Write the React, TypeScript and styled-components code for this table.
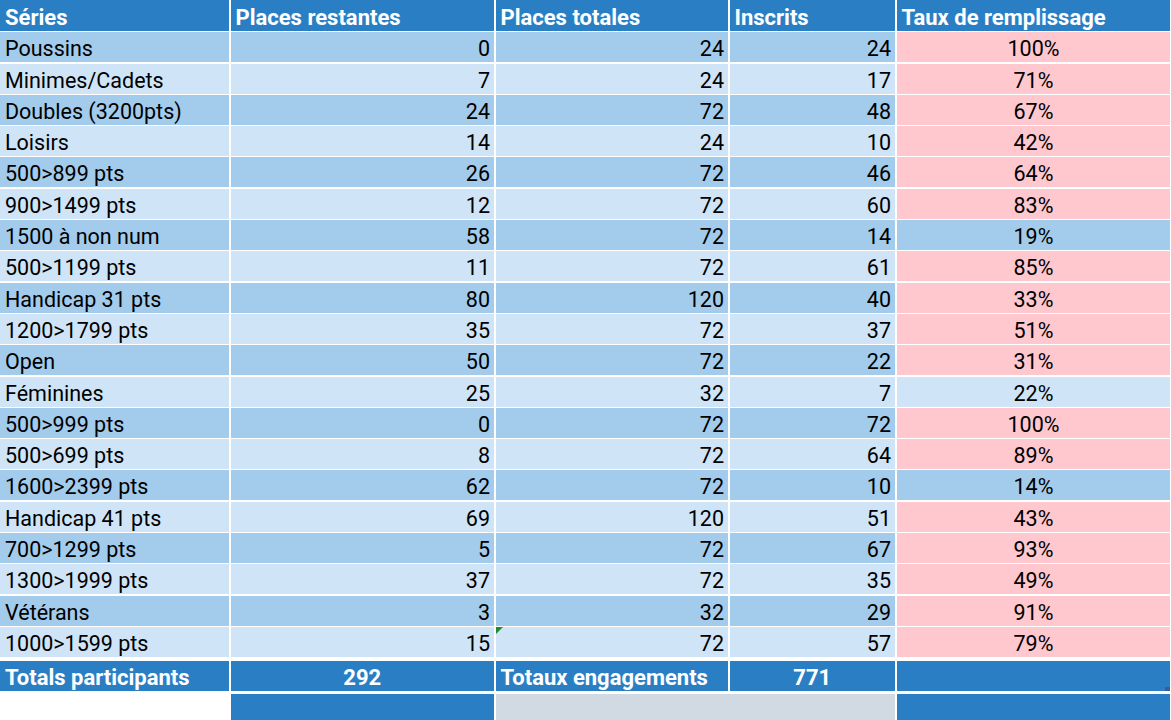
import styled, { createGlobalStyle, css } from "styled-components";

const GlobalStyle = createGlobalStyle`
  html, body {
    margin: 0;
    padding: 0;
    background: #ffffff;
  }
  body {
    font-family: Roboto, "Noto Sans", "Liberation Sans", sans-serif;
    overflow: hidden;
  }
`;

type Tone = "dark" | "light" | "pink" | "blue" | "grey" | "blank";

const tones: Record<Tone, string> = {
  dark: "#a3cbeb",
  light: "#cfe4f6",
  pink: "#ffc7ce",
  blue: "#2a7fc4",
  grey: "#d1dae3",
  blank: "#ffffff",
};

const Sheet = styled.div`
  display: grid;
  grid-template-columns: 229px 263.5px 232.5px 165.5px 273px;
  grid-template-rows: 31px repeat(20, 30px) 33px 27px;
  column-gap: 1.5px;
  row-gap: 1.3px;
  width: 1171px;
  height: 720px;
  background: #ffffff;
`;

const Cell = styled.div<{ $tone: Tone; $align?: "left" | "right" | "center" }>`
  position: relative;
  display: flex;
  align-items: center;
  justify-content: ${({ $align }) =>
    $align === "right" ? "flex-end" : $align === "center" ? "center" : "flex-start"};
  padding: 3px 4px 0 5px;
  background: ${({ $tone }) => tones[$tone]};
  color: #000000;
  font-size: 21.5px;
  white-space: nowrap;
  overflow: hidden;
`;

const HeadCell = styled(Cell)`
  color: #ffffff;
  font-weight: 700;
  font-size: 22px;
  padding-top: 3px;
`;

const TotalCell = styled(Cell)`
  color: #ffffff;
  font-weight: 700;
  font-size: 22px;
  margin-top: 3px;
  ${({ $align }) =>
    $align === "center" &&
    css`
      padding: 2px 0 0;
    `}
`;

const FootCell = styled(Cell)<{ $span?: number }>`
  margin-top: 1.4px;
  grid-column: span ${({ $span }) => $span ?? 1};
`;

const ErrorMark = styled.span`
  position: absolute;
  top: 0;
  left: 0;
  width: 0;
  height: 0;
  border-top: 7px solid #1f8a2e;
  border-right: 7px solid transparent;
`;

const ResizeMark = styled.span`
  position: absolute;
  right: 0;
  bottom: 0;
  width: 5px;
  height: 4px;
  background: #3b5a9a;
`;

const rows: [string, number, number, number, number][] = [
  ["Poussins", 0, 24, 24, 100],
  ["Minimes/Cadets", 7, 24, 17, 71],
  ["Doubles (3200pts)", 24, 72, 48, 67],
  ["Loisirs", 14, 24, 10, 42],
  ["500>899 pts", 26, 72, 46, 64],
  ["900>1499 pts", 12, 72, 60, 83],
  ["1500 à non num", 58, 72, 14, 19],
  ["500>1199 pts", 11, 72, 61, 85],
  ["Handicap 31 pts", 80, 120, 40, 33],
  ["1200>1799 pts", 35, 72, 37, 51],
  ["Open", 50, 72, 22, 31],
  ["Féminines", 25, 32, 7, 22],
  ["500>999 pts", 0, 72, 72, 100],
  ["500>699 pts", 8, 72, 64, 89],
  ["1600>2399 pts", 62, 72, 10, 14],
  ["Handicap 41 pts", 69, 120, 51, 43],
  ["700>1299 pts", 5, 72, 67, 93],
  ["1300>1999 pts", 37, 72, 35, 49],
  ["Vétérans", 3, 32, 29, 91],
  ["1000>1599 pts", 15, 72, 57, 79],
];

const headers = ["Séries", "Places restantes", "Places totales", "Inscrits", "Taux de remplissage"];

export default function App() {
  return (
    <>
      <GlobalStyle />
      <Sheet>
        {headers.map((h) => (
          <HeadCell key={h} $tone="blue">
            {h}
          </HeadCell>
        ))}

        {rows.map(([name, left, total, signed, rate], i) => {
          const band: Tone = i % 2 === 0 ? "dark" : "light";
          const last = i === rows.length - 1;
          return [
            <Cell key={`${i}-a`} $tone={band}>{name}</Cell>,
            <Cell key={`${i}-b`} $tone={band} $align="right">{left}</Cell>,
            <Cell key={`${i}-c`} $tone={band} $align="right">
              {last && <ErrorMark />}
              {total}
            </Cell>,
            <Cell key={`${i}-d`} $tone={band} $align="right">{signed}</Cell>,
            <Cell key={`${i}-e`} $tone={rate >= 25 ? "pink" : band} $align="center">
              {rate}%
            </Cell>,
          ];
        })}

        <TotalCell $tone="blue">Totals participants</TotalCell>
        <TotalCell $tone="blue" $align="center">292</TotalCell>
        <TotalCell $tone="blue">Totaux engagements</TotalCell>
        <TotalCell $tone="blue" $align="center">771</TotalCell>
        <TotalCell $tone="blue">
          <ResizeMark />
        </TotalCell>

        <FootCell $tone="blank" />
        <FootCell $tone="blue" />
        <FootCell $tone="grey" $span={2} />
        <FootCell $tone="blue" />
      </Sheet>
    </>
  );
}
